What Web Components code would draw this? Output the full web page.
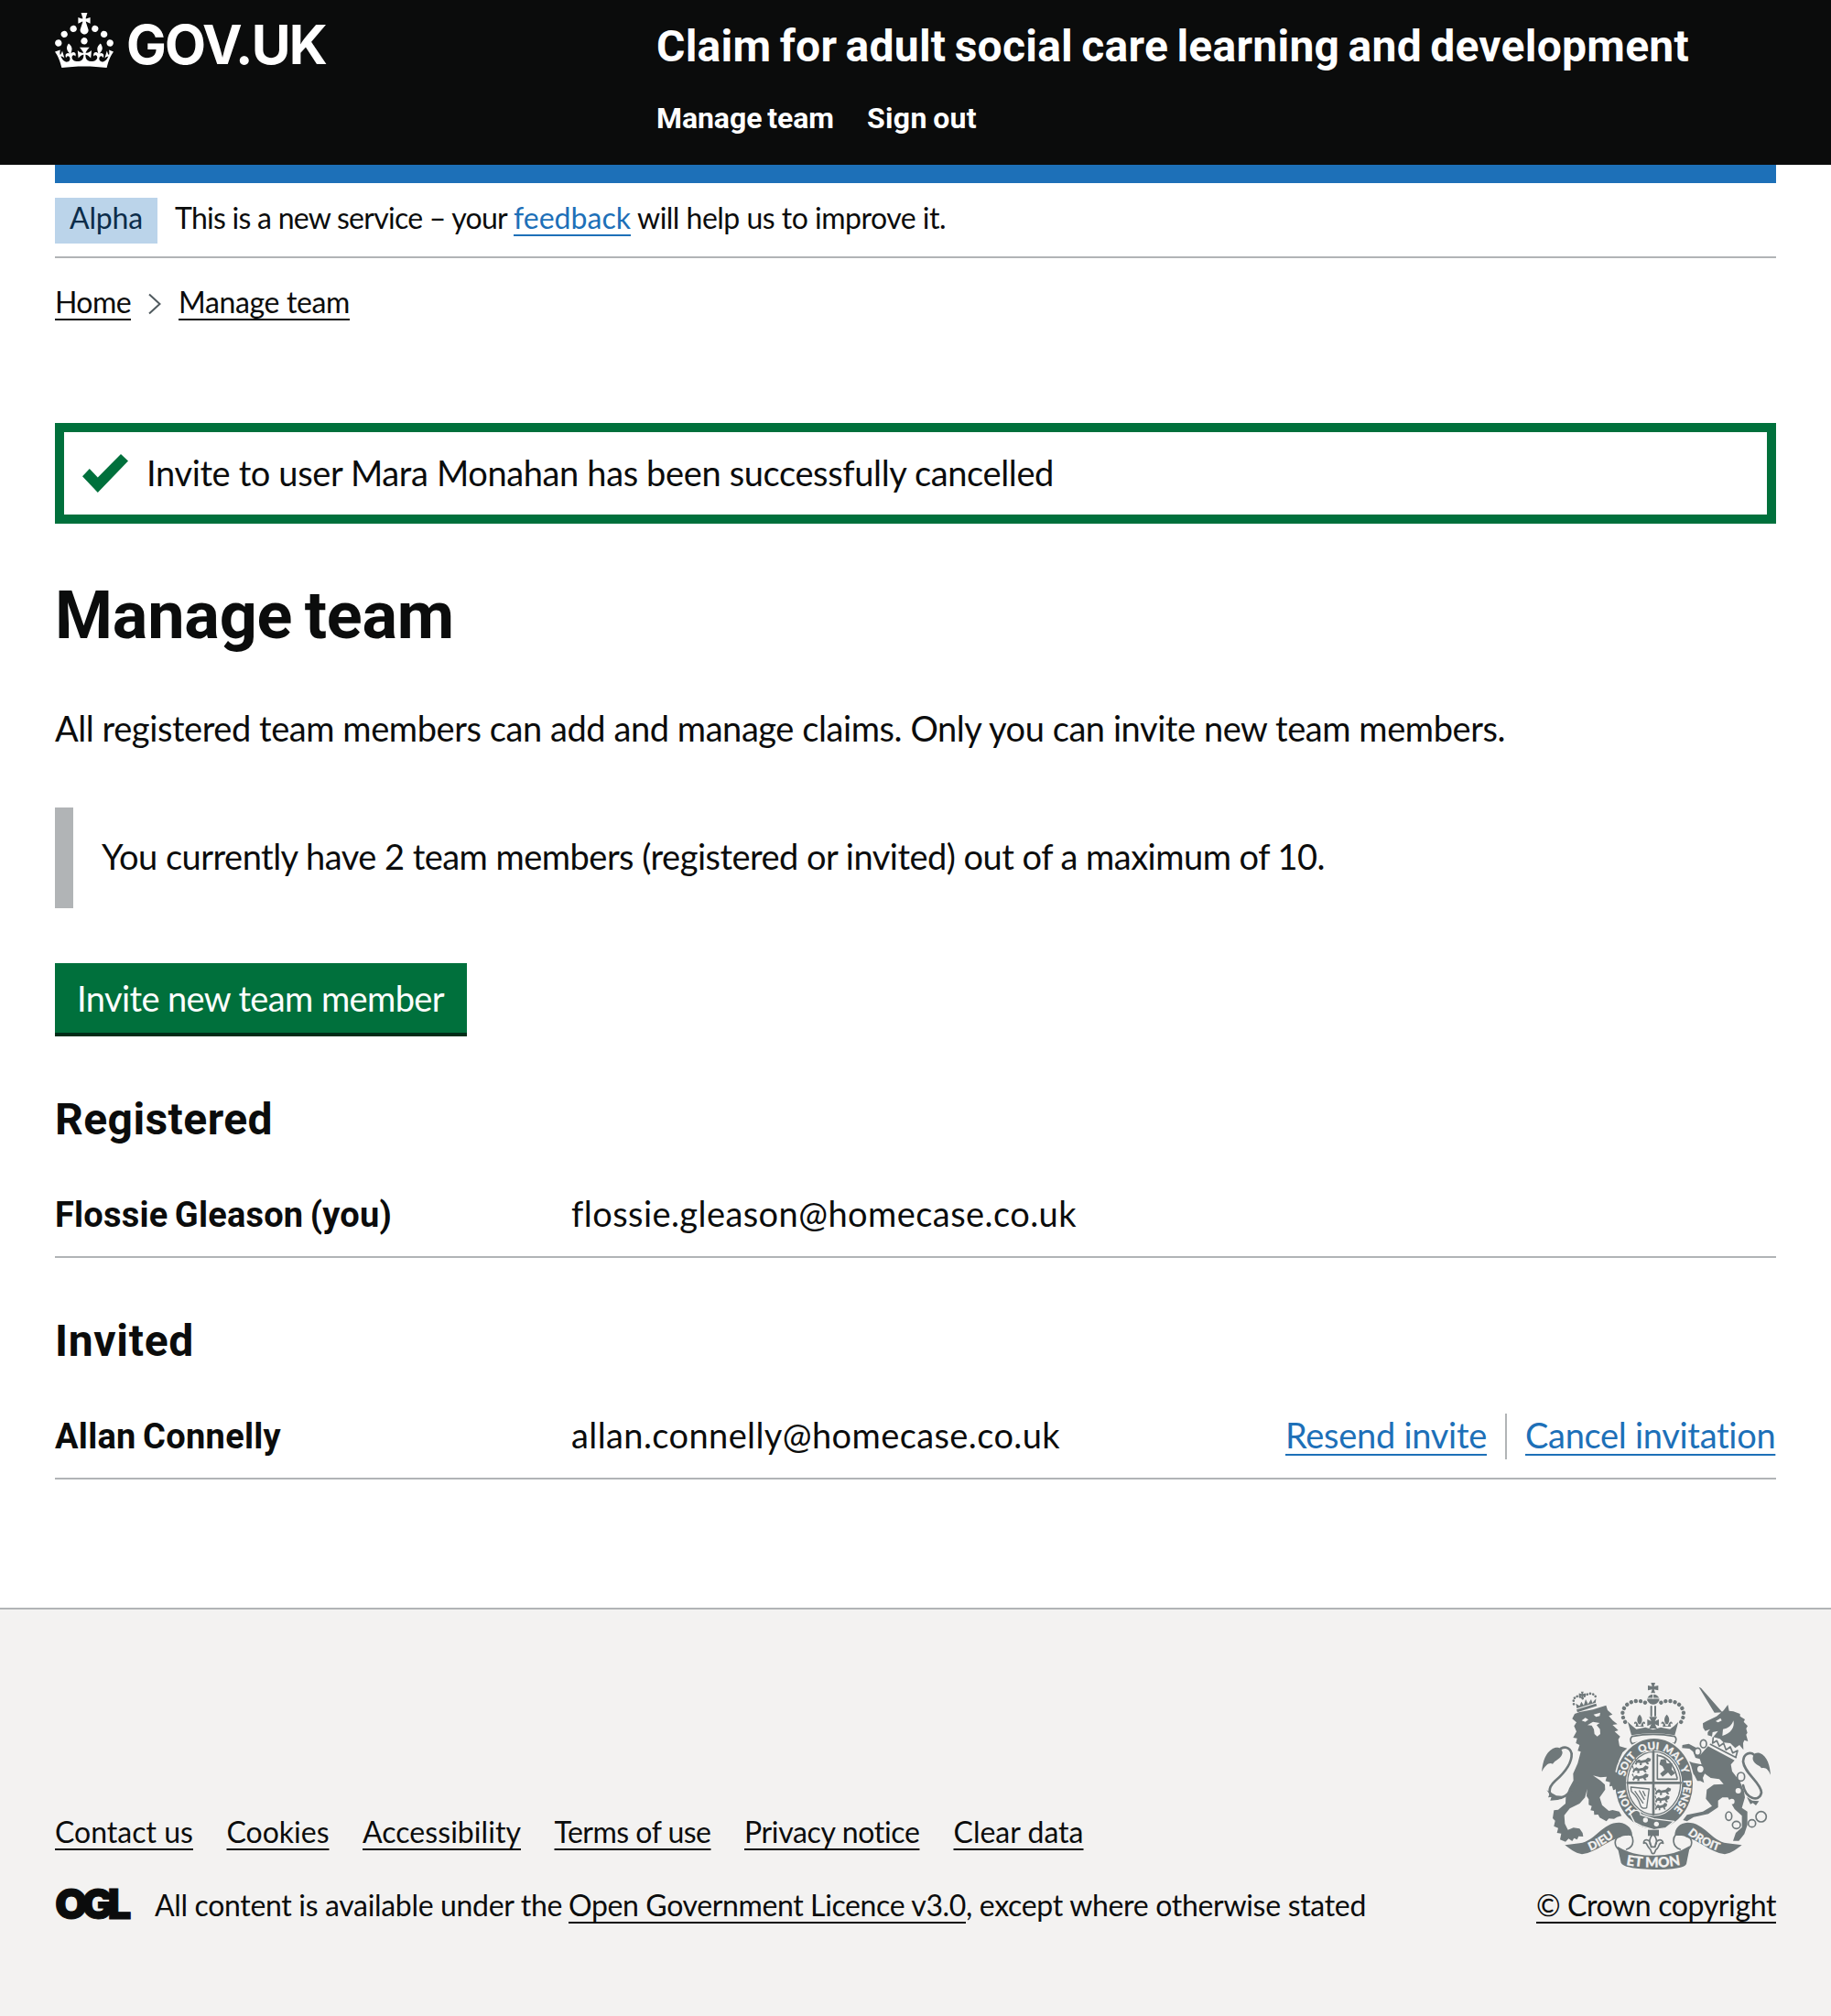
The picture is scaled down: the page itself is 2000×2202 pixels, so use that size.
<!DOCTYPE html>
<html lang="en">
<head>
<meta charset="utf-8">
<title>Manage team – Claim for adult social care learning and development</title>
<style>
html,body{margin:0;padding:0;background:#fff}
body{font-family:Lato,Roboto,"Liberation Sans",sans-serif;color:#0b0c0c}
</style>
</head>
<body>
<team-page></team-page>
<script>
const define = (name, html, setup) => customElements.define(name, class extends HTMLElement {
  connectedCallback() {
    if (this.shadowRoot) return;
    const t = document.createElement('template');
    t.innerHTML = html;
    this.attachShadow({mode: 'open'}).append(t.content.cloneNode(true));
    if (setup) setup(this, this.shadowRoot);
  }
});

/* A run of text tracked so that it fills the measure given in "w". */
define('fit-text', `<style>
  :host{display:inline-block;white-space:nowrap;width:max-content}
  :host([bold]){font-family:Roboto,"Liberation Sans",sans-serif;font-weight:700;word-spacing:-.06em}
  :host([link]) span{text-decoration:underline;text-decoration-thickness:2px;text-underline-offset:6px;text-decoration-skip-ink:none}
  :host([blue]){color:#1d70b8}
  span{display:inline-block}
</style><span><slot></slot></span>`, (el, root) => {
  const span = root.querySelector('span');
  const w = +el.getAttribute('w');
  const n = el.textContent.length;
  span.style.letterSpacing = ((w - span.getBoundingClientRect().width) / n) + 'px';
  el.style.width = w + 'px';
});

define('govuk-logo', `<style>
  :host{display:flex;width:657px;padding-top:14px;box-sizing:border-box;height:90px}
  svg{width:64px;height:60px;flex:none}
  .word{font:700 58.5px/60px Inter,Roboto,sans-serif;margin-left:14px;margin-top:5px}
</style>
<svg viewBox="0 0 32 30" fill="#fff"><path fill-rule="evenodd" d="M22.6 10.4c-1 .4-2-.1-2.4-1-.4-.9.1-2 1-2.4.9-.4 2 .1 2.4 1s-.1 2-1 2.4m-5.9 6.7c-.9.4-2-.1-2.4-1-.4-.9.1-2 1-2.4.9-.4 2 .1 2.4 1s-.1 2-1 2.4m10.8-3.7c-1 .4-2-.1-2.4-1-.4-.9.1-2 1-2.4.9-.4 2 .1 2.4 1s0 2-1 2.4m3.3 4.8c-1 .4-2-.1-2.4-1-.4-.9.1-2 1-2.4.9-.4 2 .1 2.4 1s-.1 2-1 2.4M17 4.7l2.3 1.2V2.5l-2.3.7-.2-.2.9-3h-3.4l.9 3-.2.2c-.1.1-2.3-.7-2.3-.7v3.4L15 4.7c.1.1.1.2.2.2l-1.3 4c-.1.2-.1.4-.1.6 0 1.1.8 2 1.9 2.2h.7c1-.2 1.9-1.1 1.9-2.1 0-.2 0-.4-.1-.6l-1.3-4c-.1-.2 0-.2.1-.3m-7.6 5.7c.9.4 2-.1 2.4-1 .4-.9-.1-2-1-2.4-.9-.4-2 .1-2.4 1s0 2 1 2.4m-5 3c.9.4 2-.1 2.4-1 .4-.9-.1-2-1-2.4-.9-.4-2 .1-2.4 1s.1 2 1 2.4m-3.2 4.8c.9.4 2-.1 2.4-1 .4-.9-.1-2-1-2.4-.9-.4-2 .1-2.4 1s0 2 1 2.4m14.8 11c4.4 0 8.6.3 12.3.8 1.1-4.5 2.4-7 3.7-8.8l-2.5-.9c.2 1.3.3 1.9 0 2.7-.4-.4-.8-1.1-1.1-2.3l-1.2 4c.7-.5 1.3-.8 2-.9-1.1 2.5-2.6 3.1-3.5 3-1.1-.2-1.7-1.2-1.5-2.1.3-1.2 1.5-1.5 2.1-.1 1.1-2.3-.8-3-2-2.3 1.9-1.9 2.1-3.5.6-5.6-2.1 1.6-2.1 3.2-1.2 5.5-1.2-1.4-3.2-.6-2.5 1.6.9-1.4 2.1-.5 1.9.8-.2 1.1-1.7 2.1-3.5 1.9-2.7-.2-2.9-2.1-2.9-3.6.7-.1 1.9.5 2.9 1.9l.4-4.3c-1.1 1.1-2.1 1.4-3.2 1.4.4-1.2 2.1-3 2.1-3h-5.4s1.7 1.9 2.1 3c-1.1 0-2.1-.2-3.2-1.4l.4 4.3c1-1.4 2.2-2 2.9-1.9-.1 1.5-.2 3.4-2.9 3.6-1.9.2-3.4-.8-3.5-1.9-.2-1.3 1-2.2 1.9-.8.7-2.3-1.2-3-2.5-1.6.9-2.2.9-3.9-1.2-5.5-1.5 2-1.3 3.7.6 5.6-1.2-.7-3.1 0-2 2.3.6-1.4 1.8-1.1 2.1.1.2.9-.3 1.9-1.5 2.1-.9.2-2.4-.5-3.5-3 .6 0 1.2.3 2 .9l-1.2-4c-.3 1.1-.7 1.9-1.1 2.3-.3-.8-.2-1.4 0-2.7l-2.9.9C1.3 23 2.6 25.5 3.7 30c3.7-.5 7.9-.8 12.3-.8"/></svg>
<div class="word"><fit-text w="218">GOV.UK</fit-text></div>`);

define('service-header', `<style>
  :host{display:block;background:#0b0c0c;color:#fff;height:180px;padding:0 60px}
  header{display:flex}
  .service{padding-top:19px}
  .name{font-size:48px;line-height:60px;height:60px}
  nav{display:flex;gap:36px;margin-top:30px;font-size:32px;line-height:40px}
</style>
<header><govuk-logo></govuk-logo><div class="service">
  <div class="name"><fit-text bold w="1128">Claim for adult social care learning and development</fit-text></div>
  <nav><fit-text bold w="194">Manage team</fit-text><fit-text bold w="120">Sign out</fit-text></nav>
</div></header>`);

define('phase-banner', `<style>
  :host{display:flex;padding:16px 0 14px;border-top:20px solid #1d70b8;border-bottom:2px solid #b1b4b6;font-size:32px;line-height:43px;gap:19px}
  .tag{background:#bbd4ea;color:#0c2d4a;width:112px;height:50px;box-sizing:border-box;padding-left:16px}
  .tag,p{line-height:44px}
  p{margin:0;display:flex;gap:7px;height:50px}
</style>
<div class="tag"><fit-text w="80">Alpha</fit-text></div>
<p><fit-text w="363">This is a new service – your</fit-text><fit-text link blue w="128">feedback</fit-text><fit-text w="337">will help us to improve it.</fit-text></p>`);

define('bread-crumbs', `<style>
  :host{display:flex;align-items:flex-start;margin-top:28px;font-size:32px;line-height:40px;height:40px}
  svg{width:16px;height:24px;margin:10px 18px 0 18px}
</style>
<fit-text link w="83">Home</fit-text>
<svg viewBox="0 0 16 24" fill="none" stroke="#505a5f" stroke-width="2"><path d="M2 1.500 13.500 12 2 22.500"/></svg>
<fit-text link w="187">Manage team</fit-text>`);

define('success-banner', `<style>
  :host{display:flex;box-sizing:border-box;height:110px;border:10px solid #00703c;margin-top:112px;font-size:38px;line-height:88px;padding-left:20px}
  svg{width:50px;height:42px;margin:24px 20px 0 0;flex:none}
</style>
<svg viewBox="0 0 25 19" preserveAspectRatio="none" fill="#00703c"><path d="M25 3.400 8.400 19 0 11 3.900 7.200 8.400 11.500 21 0z"/></svg>
<slot></slot>`);

define('inset-text', `<style>
  :host{display:block;border-left:20px solid #b1b4b6;height:110px;padding-left:31px;margin-top:62px;font-size:38px;line-height:107px;box-sizing:border-box}
</style><slot></slot>`);

define('start-button', `<style>
  :host{display:block;box-sizing:border-box;background:#00703c;color:#fff;border-bottom:4px solid #002d18;width:450px;height:80px;margin-top:60px;padding-left:24px;font-size:38px;line-height:76px}
</style><slot></slot>`);

define('section-title', `<style>:host{display:block;font-size:48px;line-height:58px;height:60px;margin-top:60px}</style><slot></slot>`);

define('member-row', `<style>
  :host{display:flex;align-items:baseline;height:72px;border-bottom:2px solid #b1b4b6;margin-top:48px;font-size:38px;line-height:51px}
  .name{width:564px}
  .mail{flex:1}
</style><div class="name"><slot name="name"></slot></div><div class="mail"><slot></slot></div><slot name="actions"></slot>`);

define('action-links', `<style>
  :host{display:flex}
  i{width:2px;height:50px;background:#b1b4b6;margin:2px 20px 0}
</style><fit-text link blue w="220">Resend invite</fit-text><i></i><fit-text link blue w="274">Cancel invitation</fit-text>`);

define('royal-arms', `<style>
  :host{display:block;width:250px;height:204px}
  svg{display:block;width:250px;height:204px;overflow:visible}
  text{font-family:Lato,sans-serif;font-weight:900;fill:#f3f2f1;stroke:#f3f2f1;stroke-width:.8}
</style>
<svg viewBox="72 54 750 612" fill="#6f787a" stroke-linecap="round" stroke-linejoin="round">
<defs>
  <path id="ring" pathLength="360" d="M440 497A97 112 0 0 1 440 273A97 112 0 0 1 440 497"/>
  <path id="l1" d="M216 611Q275 590 322 548"/><path id="l2" d="M546 546Q596 590 664 609"/><path id="l3" d="M345 650Q437 668 530 650"/>
  <g id="fl"><path d="M0-24C-12-12-8 0-3 8H3C8 0 12-12 0-24M-4 14C-6-2-20-6-18 8-12 2-10 10-14 16H14C10 10 12 2 18 8 20-6 6-2 4 14z"/></g>
  <g id="cr"><path d="M-7-17H7L3-5 17-8V8L3 5 7 17H-7L-3 5-17 8V-8L-3-5z"/></g>
  <g id="pass"><path d="M0 6l8-5 8 4 14-3 8-7 10 4-2 8-8 3 4 7-6 1-6-7-12 2 0 7-7 0 1-7-8-1-4 7-5-3 4-8-6-9 4-4z"/></g>
</defs>
<!-- lion -->
<path d="M172 172 180 156 196 150 240 142 283 128 288 144 304 158 292 163 305 178 320 190 304 192 323 210 311 214 329 230 323 240 327 262 352 269 337 282 325 308 327 340 346 362 345 408 332 402 324 412 316 402 306 406 303 392 294 394 296 380 281 376 285 362 264 364 240 358 264 374 279 388 280 404 262 430 270 455 292 474 304 471 326 476 334 490 319 494 309 500 292 499 284 508 262 496 257 486 244 487 243 474 232 472 236 458 226 454 226 436 219 425 221 402 214 430 196 450 164 466 146 488 148 516 158 536 176 529 196 532 206 546 208 558 193 557 188 568 178 563 172 573 160 565 150 575 132 568 136 548 122 546 126 530 112 524 116 506 108 498 112 472 126 470 150 450 151 428 162 400 176 374 175 352 190 318 200 280 190 277 196 258 184 252 188 236 175 234 186 214 178 196 186 184z"/>
<path d="M203 178 215 169 225 175 215 182zM242 158 264 152 262 163 250 166zM222 193 240 182 262 186 252 193 263 206 264 222 254 230 245 222 243 206 236 194z" fill="#f3f2f1"/>
<path d="M186 142 250 122 253 130 189 151zM187 138 184 122 196 130 202 116 210 128 216 108 224 124 234 108 238 120 250 106 249 119z"/>
<path d="M177 124C172 98 192 92 206 106 216 86 248 82 251 108" fill="none" stroke="#6f787a" stroke-width="8" stroke-dasharray=".1 10"/>
<use href="#cr" transform="translate(205 94) scale(.65)"/>
<path d="M193 384C166 398 162 432 122 433 92 426 90 400 116 376 150 346 172 318 170 286 164 262 146 264 134 270" fill="none" stroke="#6f787a" stroke-width="8"/>
<path d="M72 346C76 310 84 284 108 270 126 260 140 270 140 284 136 304 116 306 108 320 96 314 84 324 72 346M88 406 98 418 93 430 104 428 100 440 124 438 150 426 120 424z"/>
<!-- unicorn -->
<path d="M587 68 594 71 664 151 638 152zM600 187 612 180 645 164 668 145 682 126 686 146 700 148 722 156 722 164 738 174 734 182 747 196 742 204 746 218 742 224 748 246 736 242 732 252 733 274 720 258 706 268 690 252 668 250 656 238 634 232 650 212 632 216 630 230 616 226 616 216 624 206 608 212 601 202z"/>
<path d="M642 180 658 170 662 178 650 184zM666 206C682 206 696 192 700 178 706 200 692 220 664 228z" fill="#f3f2f1"/>
<path d="M625 230 716 276 722 296 706 306 625 262 632 250z" fill="#f3f2f1"/>
<path d="M625 256 709 299M634 234 632 252 646 244 654 262 668 252 676 274 690 264 698 284 714 276 708 298" fill="none" stroke="#6f787a" stroke-width="5"/>
<path d="M617 262 704 308 692 322 696 344 722 378 735 410 738 430 728 464 746 476 746 520 736 550 718 572 699 572 708 546 728 528 728 490 704 468 682 430 664 430 650 440 650 462 618 484 570 494 548 508 535 504 548 487 600 476 630 458 610 434 613 404 636 388 668 386 654 370 626 366 606 352 600 366 604 382 592 376 582 376 572 356 556 344 560 330 548 308 566 316 596 322 590 304 576 300 568 280 556 270 532 268 533 258 554 254 584 270 592 290z"/>
<g fill="none" stroke="#6f787a" stroke-width="5"><ellipse cx="602" cy="254" rx="10" ry="13"/><ellipse cx="583" cy="280" rx="10" ry="12" fill="#f3f2f1"/><ellipse cx="725" cy="362" rx="12" ry="14" fill="#f3f2f1"/><ellipse cx="685" cy="491" rx="10" ry="14"/><ellipse cx="710" cy="520" rx="13" ry="12"/><ellipse cx="761" cy="515" rx="12" ry="12"/><circle cx="791" cy="493" r="17"/></g>
<g fill="#f3f2f1"><ellipse cx="592" cy="337" rx="10" ry="11"/><circle cx="716" cy="408" r="9"/><circle cx="695" cy="443" r="9"/></g>
<path d="M732 390C740 432 784 450 792 414 790 380 736 352 732 312 734 284 756 280 768 290" fill="none" stroke="#6f787a" stroke-width="8"/>
<path d="M822 356C820 326 812 294 786 284 770 280 762 292 764 306 770 324 788 324 792 334 806 330 814 338 822 356M744 428 762 440 784 442 774 456 764 448 756 452z"/>
<!-- crown -->
<use href="#cr" transform="translate(437 71)"/>
<path d="M418 106A20 18 0 0 1 457 106V112C448 130 427 130 418 112z"/><path d="M418 105H457M437 88V105" stroke="#f3f2f1" stroke-width="3"/>
<path d="M411 119C378 104 338 122 337 156 338 174 346 184 352 192M463 119C496 104 536 122 537 156 536 174 528 184 522 192" fill="none" stroke="#6f787a" stroke-width="13" stroke-dasharray=".1 15.500"/>
<path d="M431 132V162M444 132V162" stroke="#6f787a" stroke-width="6"/>
<path d="M354 182 369 196 382 206 412 200 437 208 462 200 492 206 506 196 520 182 508 226Q437 214 366 226zM424 166H450L443 180 456 174V196L443 190 450 204H424L431 190 418 196V174L431 180z"/>
<use href="#fl" transform="translate(393 182)"/><use href="#fl" transform="translate(482 182)"/>
<path d="M368 230Q437 216 508 230Q518 240 506 254Q437 232 368 254Q358 240 368 230z" fill="#f3f2f1" stroke="#6f787a" stroke-width="5"/>
<!-- garter and shield -->
<ellipse cx="440" cy="385" rx="132" ry="152" fill="#f3f2f1"/><ellipse cx="440" cy="385" rx="127" ry="148"/>
<ellipse cx="440" cy="383" rx="92" ry="108" fill="#f3f2f1"/>
<ellipse cx="440" cy="383" rx="87" ry="103" fill="none" stroke="#6f787a" stroke-width="4"/>
<path d="M438 280V486M353 382H527" stroke="#6f787a" stroke-width="8"/>
<g><use href="#pass" transform="translate(382 304)"/><use href="#pass" transform="translate(374 330)"/><use href="#pass" transform="translate(374 356)"/>
<use href="#pass" transform="translate(448 402)"/><use href="#pass" transform="translate(448 428) scale(.9 1)"/><use href="#pass" transform="translate(447 452) scale(.75 1)"/></g>
<path d="M451 370V290M451 370H516M451 292Q500 298 516 366" fill="none" stroke="#6f787a" stroke-width="5"/>
<path d="M462 306 478 304 482 318 500 318 498 338 510 350 496 360 486 348 468 362 460 352 474 340 468 328 458 322z"/>
<path d="M364 396 424 402 416 464Q398 470 394 452 388 430 366 410zM378 410 404 448M392 408 408 436M404 410 411 424" fill="none" stroke="#6f787a" stroke-width="4"/>
<path d="M362 484C376 466 396 470 396 486L440 500 506 508 478 530 440 536 400 524 376 512z" stroke="#f3f2f1" stroke-width="4"/>
<circle cx="412" cy="504" r="8" fill="#f3f2f1"/><circle cx="448" cy="517" r="8" fill="#f3f2f1"/>
<path d="M300 340 346 362 345 408 332 402 324 412 316 402 308 406 300 380z"/>
<g font-size="34" text-anchor="middle">
<text><textPath href="#ring" startOffset="58">HON</textPath></text><text><textPath href="#ring" startOffset="124">SOIT</textPath></text><text><textPath href="#ring" startOffset="171">QUI</textPath></text><text><textPath href="#ring" startOffset="215">MAL</textPath></text><text><textPath href="#ring" startOffset="246">Y</textPath></text><text><textPath href="#ring" startOffset="292">PENSE</textPath></text></g>
<!-- motto ribbon -->
<path d="M148 586 196 580C250 572 270 512 326 512 350 514 368 530 369 554 350 556 340 552 330 560 286 570 256 608 204 616 180 612 164 598 148 586M728 586 680 580C626 572 606 512 550 512 524 514 508 530 508 554 526 556 536 552 546 560 590 570 620 608 672 616 696 612 712 598 728 586"/>
<path d="M328 556C306 566 310 590 326 602M350 600C380 590 370 560 366 554M548 556C570 566 566 590 550 602M526 600C496 590 504 560 510 554" fill="none" stroke="#6f787a" stroke-width="5"/>
<path d="M320 590Q372 622 437 620 504 622 558 588L546 648Q538 666 437 666 342 664 332 644z"/>
<g text-anchor="middle" font-size="38"><text><textPath href="#l1" startOffset="50%">DIEU</textPath></text><text font-size="37"><textPath href="#l2" startOffset="47%">DROIT</textPath></text><text font-size="46"><textPath href="#l3" startOffset="50%">ET MON</textPath></text></g>
<path d="M420 536H456V556H420z"/>
<path d="M437 550C420 566 424 580 432 592H442C450 580 454 566 437 550M430 592C430 566 406 562 406 580 418 574 416 590 426 598 434 604 428 614 437 614 446 614 440 604 450 598 458 590 456 574 470 580 468 562 444 566 444 592" fill="#f3f2f1" stroke="#6f787a" stroke-width="5"/>
</svg>`);

define('page-footer', `<style>
  :host{display:block;box-sizing:border-box;background:#f3f2f1;border-top:2px solid #b1b4b6;margin-top:140px;height:446px;padding:80px 60px 0;font-size:32px;line-height:41px}
  footer{display:flex;justify-content:space-between;align-items:flex-end}
  nav{display:flex;gap:36.500px;height:40px}
  .lic{display:flex;margin-top:40px;height:40px}
  .ogl{font:900 46px/40px Inter,sans-serif;width:109px;margin-top:-1px}
  .ogl fit-text{-webkit-text-stroke:1px #0b0c0c}
  .gap{margin-left:7px}
  .right{display:flex;flex-direction:column;align-items:center}
  .copy{margin-top:18px;height:40px}
</style>
<footer><div>
<nav><fit-text link w="151">Contact us</fit-text><fit-text link w="112">Cookies</fit-text><fit-text link w="173">Accessibility</fit-text><fit-text link w="171">Terms of use</fit-text><fit-text link w="192">Privacy notice</fit-text><fit-text link w="142">Clear data</fit-text></nav>
<div class="lic"><div class="ogl"><fit-text w="77">OGL</fit-text></div><fit-text w="445">All content is available under the</fit-text><fit-text class="gap" link w="434">Open Government Licence v3.0</fit-text><fit-text w="437">, except where otherwise stated</fit-text></div>
</div>
<div class="right"><royal-arms></royal-arms><div class="copy"><fit-text link w="262">© Crown copyright</fit-text></div></div>
</footer>`);

define('team-page', `<style>
  :host{display:block;width:2000px;height:2202px;overflow:hidden}
  main{display:block;padding:0 60px}
  h1{margin:57px 0 0;font-size:72px;line-height:80px;height:82px}
  .lead{margin:59px 0 0;font-size:38px;line-height:51px;height:50px}
</style>
<service-header></service-header>
<main>
  <phase-banner></phase-banner>
  <bread-crumbs></bread-crumbs>
  <success-banner><fit-text w="991">Invite to user Mara Monahan has been successfully cancelled</fit-text></success-banner>
  <h1><fit-text bold w="436">Manage team</fit-text></h1>
  <p class="lead"><fit-text w="1584">All registered team members can add and manage claims. Only you can invite new team members.</fit-text></p>
  <inset-text><fit-text w="1336">You currently have 2 team members (registered or invited) out of a maximum of 10.</fit-text></inset-text>
  <start-button><fit-text w="401">Invite new team member</fit-text></start-button>
  <section-title><fit-text bold w="238">Registered</fit-text></section-title>
  <member-row><fit-text slot="name" bold w="368">Flossie Gleason (you)</fit-text><fit-text w="552">flossie.gleason@homecase.co.uk</fit-text></member-row>
  <section-title><fit-text bold w="152">Invited</fit-text></section-title>
  <member-row><fit-text slot="name" bold w="247">Allan Connelly</fit-text><fit-text w="534">allan.connelly@homecase.co.uk</fit-text><action-links slot="actions"></action-links></member-row>
</main>
<page-footer></page-footer>`);
</script>
</body>
</html>
